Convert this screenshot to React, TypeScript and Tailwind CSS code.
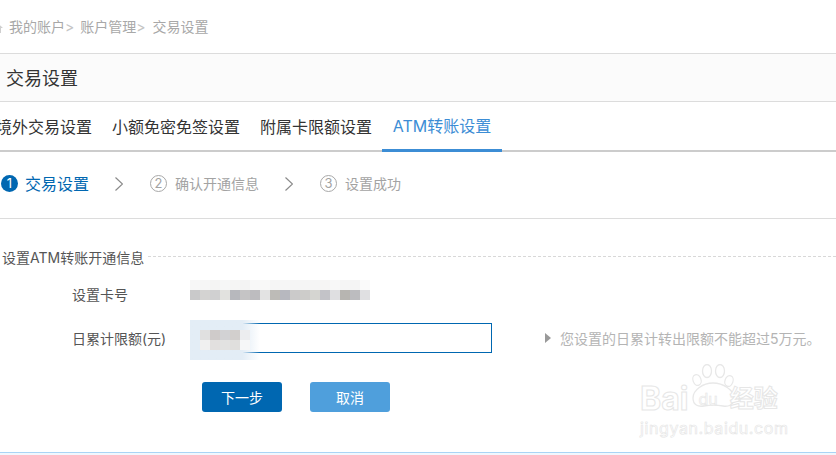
const tabs = ['境外交易设置', '小额免密免签设置', '附属卡限额设置'];

const cardTop = ['#f7f7f7', '#f6f6f6', '#f4f4f3', '#f6f7f7', '#f5f5f4', '#f3f3f3', '#f8f8f8', '#f9f9f8', '#f5f5f5', '#f6f6f6', '#f5f5f5', '#f5f5f5', '#f5f5f5', '#f6f5f4', '#f8f8f8', '#f5f5f5', '#f4f4f4', '#fafafa'];
const cardBottom = ['#c9c9ca', '#d4d3d2', '#d0d0d1', '#e2e2df', '#b7b8bd', '#c5c4c5', '#bdbcbf', '#e3e3e3', '#bdbbb7', '#b7b8bf', '#cbcaca', '#cdccca', '#d5d5d1', '#c3c3c8', '#dfdfe1', '#b7b5b1', '#bcbcbf', '#e0e0e2'];
const amountTop = ['#e0e0e0', '#cfcbca', '#d2d2d4', '#d2cfcd', '#ecedef'];
const amountBottom = ['#f0f0f0', '#e2e0df', '#e2e2e1', '#e0dfdd', '#f6f7f8'];

function Mosaic({ colors }: { colors: string[] }) {
  return (
    <div className="flex h-[10px]">
      {colors.map((c, i) => (
        <div key={i} className="h-[10px] w-[10px]" style={{ backgroundColor: c }} />
      ))}
    </div>
  );
}

function Step({ n, label }: { n: number; label: string }) {
  return (
    <div className="flex items-center text-[14px] text-[#a3a3a3]">
      <span className="flex h-[17px] w-[17px] items-center justify-center rounded-full border border-[#a8a8a8] text-[13px] leading-none">{n}</span>
      <span className="ml-[8px]">{label}</span>
    </div>
  );
}

function Chevron() {
  return (
    <svg width="8" height="14" viewBox="0 0 8 14" className="ml-[26px] mr-[27px]" fill="none" stroke="#8a8a8a" strokeWidth="1.2">
      <path d="M0.5 0.5 7.5 7 0.5 13.5" />
    </svg>
  );
}

function Watermark() {
  return (
    <div className="absolute left-[640px] top-[364px] w-[152px] select-none">
      <svg width="46" height="44" viewBox="0 0 46 44" className="absolute left-[51px] top-0" fill="none" stroke="#e8e8e8" strokeWidth="1.3">
        <ellipse cx="6" cy="16" rx="4" ry="5.5" transform="rotate(-20 6 16)" />
        <ellipse cx="16" cy="7" rx="4.5" ry="6.5" />
        <ellipse cx="29" cy="7" rx="4.5" ry="6.5" />
        <ellipse cx="38" cy="17" rx="4" ry="5.5" transform="rotate(20 38 17)" />
        <path d="M2 34c0-8 10-15 20-15s21 7 21 15c0 7-6 9-11 8-6-1-13-1-19 0-6 1-11-1-11-8z" />
      </svg>
      <div className="relative mt-[19px] flex h-[32px] items-center text-[32px] font-bold leading-none text-white [-webkit-text-stroke:1px_#e6e6e6]">
        <span>Bai</span>
        <span className="ml-[10px] text-[16px] font-normal text-[#fafafa] [-webkit-text-stroke:0.5px_#e4e4e4]">du</span>
        <span className="ml-[12px] text-[24px]">经验</span>
      </div>
      <div className="relative mt-[4px] h-[18px] text-[16px] leading-[18px] tracking-[0.6px] text-white [-webkit-text-stroke:0.6px_#e4e4e4]">jingyan.baidu.com</div>
    </div>
  );
}

export default function App() {
  return (
    <div className="relative flex h-[455px] w-[836px] flex-col overflow-hidden bg-white font-['Inter','Noto_Sans_CJK_SC',sans-serif] text-[#444]">
      {/* breadcrumb */}
      <div className="flex h-[54px] shrink-0 items-center border-b border-[#dcdcdc] pb-px text-[14px] text-[#a8a8a8]">
        <svg width="11" height="10" viewBox="0 0 11 10" className="ml-[-8px] mr-[6px] mt-[3px]" fill="#cfcfcf">
          <path d="M5.5 0 11 5H9v5H2V5H0z" />
        </svg>
        <span>我的账户</span>
        <span className="mr-[6px] text-[#c4c4c4]">&gt;</span>
        <span>账户管理</span>
        <span className="mr-[7px] text-[#c4c4c4]">&gt;</span>
        <span>交易设置</span>
      </div>

      {/* page title */}
      <div className="flex h-[48px] shrink-0 items-center border-b border-[#dcdcdc] bg-[#fbfbfb] pl-[6px] pt-[2px] text-[18px] text-[#333]">
        交易设置
      </div>

      {/* tabs */}
      <div className="ml-[-14px] flex h-[50px] w-[850px] shrink-0 border-b-2 border-[#cccccc] text-[16px] text-[#333]">
        {tabs.map((t) => (
          <div key={t} className="flex items-center px-[10px] pt-[1px]">{t}</div>
        ))}
        <div className="mb-[-2px] flex w-[120px] items-center justify-center border-b-[3px] border-[#3c8dd5] text-[#3c8dd5]">ATM转账设置</div>
      </div>

      {/* steps */}
      <div className="flex h-[67px] shrink-0 items-center border-b border-[#dcdcdc] pl-[1px] pb-[3px]">
        <div className="flex items-center text-[16px] text-[#0067b1]">
          <span className="flex h-[17px] w-[17px] items-center justify-center rounded-full bg-[#0067b1] text-[13px] leading-none text-white">1</span>
          <span className="ml-[7px]">交易设置</span>
        </div>
        <Chevron />
        <Step n={2} label="确认开通信息" />
        <Chevron />
        <Step n={3} label="设置成功" />
      </div>

      {/* form heading */}
      <div className="mt-[28px] flex h-[20px] shrink-0 items-center pl-[2px] text-[14px] text-[#555]">
        <span>设置ATM转账开通信息</span>
        <div className="ml-[4px] mt-[-2px] flex-1 border-t border-dashed border-[#d8d8d8]" />
      </div>

      {/* card row */}
      <div className="mt-[15px] flex h-[24px] shrink-0 items-center pl-[72px] text-[14px] text-[#555]">
        <span className="w-[118px]">设置卡号</span>
        <div className="mt-[-8px]">
          <Mosaic colors={cardTop} />
          <Mosaic colors={cardBottom} />
        </div>
      </div>

      {/* limit row */}
      <div className="mt-[17px] flex h-[30px] shrink-0 items-center pl-[72px] text-[14px] text-[#555]">
        <span className="w-[118px]">日累计限额(元)</span>
        <div className="relative h-[30px] w-[302px] border border-[#0067b1] border-l-0 bg-white">
          <div className="absolute left-0 top-[-4px] h-[40px] w-[70px] bg-gradient-to-r from-[#e3edf6] from-[75%] to-white/0" />
          <div className="absolute left-[10px] top-[6px]">
            <Mosaic colors={amountTop} />
            <Mosaic colors={amountBottom} />
          </div>
        </div>
        <div className="ml-[53px] h-0 w-0 border-y-[5px] border-l-[6px] border-y-transparent border-l-[#999]" />
        <span className="ml-[9px] whitespace-nowrap text-[14px] text-[#b4b4b4]">您设置的日累计转出限额不能超过5万元。</span>
      </div>

      {/* actions */}
      <div className="mt-[29px] flex shrink-0 gap-[28px] pl-[202px]">
        <button className="h-[30px] w-[80px] rounded-[3px] bg-[#0067b1] text-[14px] text-white">下一步</button>
        <button className="h-[30px] w-[80px] rounded-[3px] bg-[#4f9fdc] text-[14px] text-white">取消</button>
      </div>

      <div className="mt-[40px] flex-1 border-t border-[#a9d4f5] bg-[#f1f7fd]" />

      <Watermark />
    </div>
  );
}
